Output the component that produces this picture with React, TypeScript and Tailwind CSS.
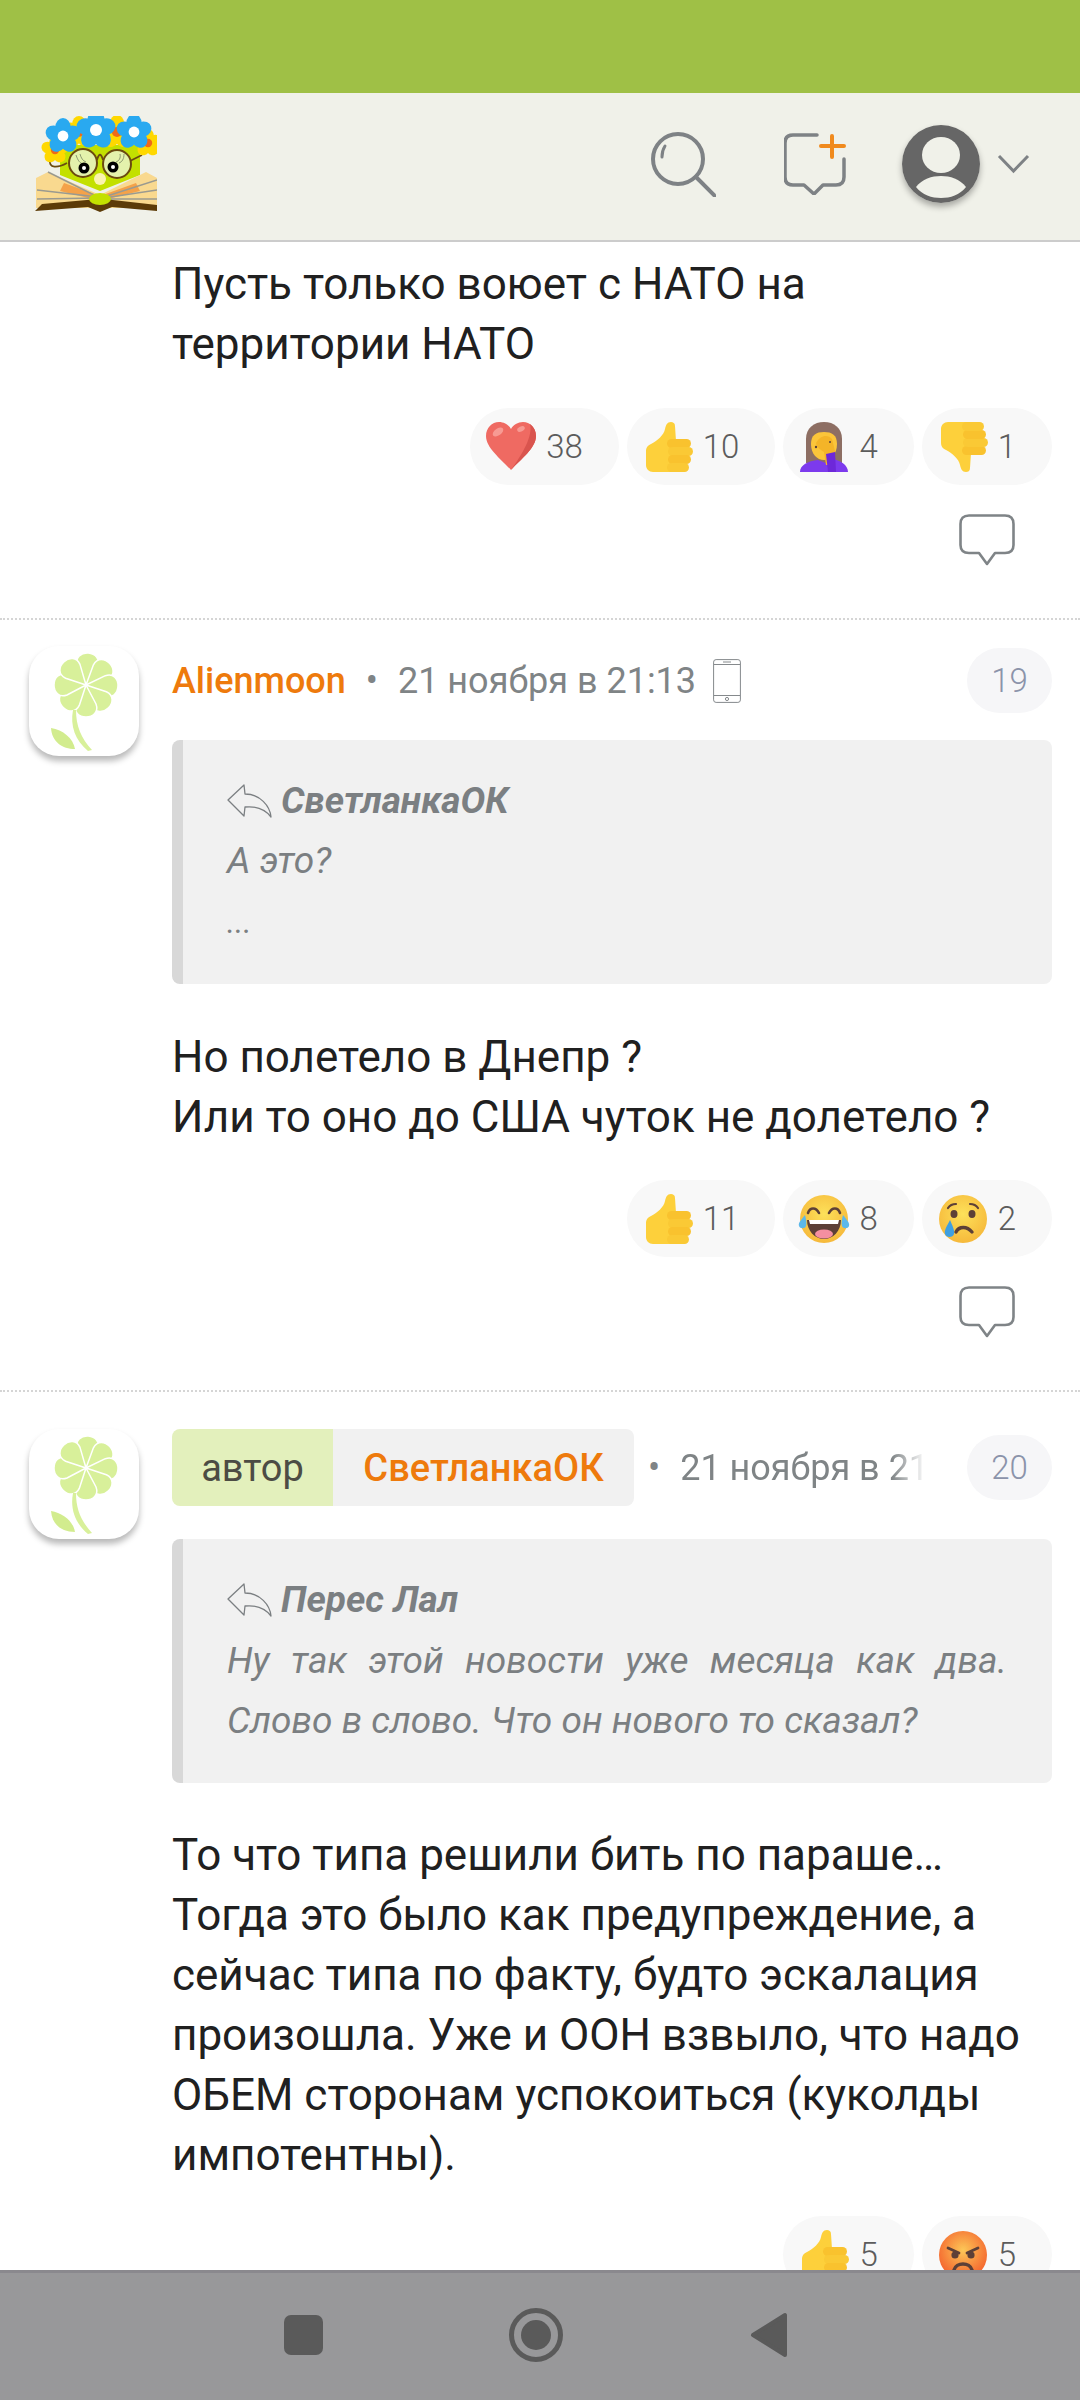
import type { ReactNode } from 'react'

const FONT = { fontFamily: 'Roboto, sans-serif' }

function LogoFlower({ x, y, petal, core, r = 5.5 }: { x: number; y: number; petal: string; core: string; r?: number }) {
  return (
    <g>
      {[0, 72, 144, 216, 288].map((a) => (
        <ellipse key={a} cx={x} cy={y - r} rx={r * 0.85} ry={r} fill={petal} transform={`rotate(${a} ${x} ${y})`} />
      ))}
      <circle cx={x} cy={y} r={r * 0.6} fill={core} />
    </g>
  )
}

function Logo() {
  return (
    <svg width="123" height="96" viewBox="14 33 123 96">
      {/* head */}
      <path d="M40 62 H120 V92 L80 108 L40 92 Z" fill="#c3e000" />
      {/* book pages */}
      <path d="M16 95 L28 89 L80 112 L126 89 L137 95 V125 H16 Z" fill="#f9d98f" />
      <path d="M44 100 L80 113 L116 100 L120 108 L80 118 L40 108 Z" fill="#f4a24a" />
      <path d="M28 89 L78 114 M17 107 L78 114 M17 116 L78 115 M137 97 L84 114 M137 107 L84 115 M137 116 L84 116" stroke="#9a9a90" strokeWidth="1.4" fill="none" />
      <path d="M15 128 L22 121 L78 116 L84 116 L137 122 V128 L92 124 L80 129 L68 124 Z" fill="#5c3b08" />
      <ellipse cx="80" cy="116" rx="11" ry="6" fill="#c3e000" />
      <ellipse cx="80" cy="96" rx="6" ry="6" fill="#fbf3b0" />
      {/* glasses */}
      <path d="M47 80 C38 85 28 86 30 76 C31 72 34 70 38 70 M106 80 L122 72" stroke="#6b4a10" strokeWidth="1.8" fill="none" />
      <circle cx="63" cy="80" r="14" fill="#e4f2ac" stroke="#6b4a10" strokeWidth="2" />
      <circle cx="97" cy="81" r="14" fill="#e4f2ac" stroke="#6b4a10" strokeWidth="2" />
      <path d="M77 77 C79 70 81 70 83 77" stroke="#6b4a10" strokeWidth="1.8" fill="none" />
      <path d="M56 72 C58 78 60 80 63 81 M60 71 C61 75 63 78 66 79 M104 71 C104 76 102 79 99 80 M100 71 C101 75 99 78 96 79" stroke="#8d9a70" strokeWidth="1" fill="none" />
      <circle cx="64" cy="85" r="5.5" fill="#000" />
      <circle cx="64" cy="85" r="2" fill="#fff" />
      <circle cx="93" cy="84" r="5.5" fill="#000" />
      <circle cx="93" cy="84" r="2" fill="#fff" />
      {/* wreath */}
      <LogoFlower x={35} y={67} petal="#ffd800" core="#ee6a1a" r={7} />
      <LogoFlower x={128} y={60} petal="#ffd800" core="#ee6a1a" r={7} />
      <LogoFlower x={59} y={49} petal="#ffd800" core="#ee6a1a" r={8} />
      <LogoFlower x={97} y={49} petal="#ffd800" core="#ee6a1a" r={8.5} />
      <LogoFlower x={43} y={53} petal="#29a9f0" core="#fff" r={9} />
      <LogoFlower x={76} y={47} petal="#29a9f0" core="#fff" r={10} />
      <LogoFlower x={114} y={49} petal="#29a9f0" core="#fff" r={9} />
    </svg>
  )
}

function SearchIcon() {
  return (
    <svg width="65" height="66" viewBox="0 0 65 66" fill="none" stroke="#7e8285" strokeLinecap="round">
      <circle cx="27" cy="28" r="25" strokeWidth="4" />
      <path d="M45 46 L64 65" strokeWidth="4" />
      <path d="M11 26 C11 21 12 18 14 15" strokeWidth="3" />
    </svg>
  )
}

function ComposeIcon() {
  return (
    <svg width="62" height="62" viewBox="0 0 62 62" fill="none" strokeLinecap="round" strokeLinejoin="round">
      <path d="M33 2 H9 Q1 2 1 10 V44 Q1 52 9 52 H20 L30 61 L39 52 H52 Q60 52 60 44 V26" stroke="#7e8285" strokeWidth="3.5" />
      <path d="M48 3 V24 M37 13 H60" stroke="#f08a1d" strokeWidth="4" />
    </svg>
  )
}

function UserIcon() {
  return (
    <div className="w-[78px] h-[78px] rounded-full shadow-[0_4px_6px_rgba(0,0,0,0.3)]">
      <svg width="78" height="78" viewBox="0 0 78 78">
        <circle cx="39" cy="39" r="39" fill="#666666" />
        <ellipse cx="39" cy="30" rx="19" ry="18" fill="#f0f1e9" />
        <path d="M14 62 C20 54 30 51 39 51 C48 51 58 54 64 62 C58 70 48 73 39 73 C30 73 20 70 14 62 Z" fill="#f0f1e9" />
      </svg>
    </div>
  )
}

function CommentIcon() {
  return (
    <svg width="56" height="52" viewBox="0 0 56 52" fill="none" stroke="#7f8487" strokeWidth="2.6" strokeLinejoin="round">
      <path d="M10 1.5 H46 Q54.5 1.5 54.5 10 V31 Q54.5 39 46 39 H36 L28 50 L20 39 H10 Q1.5 39 1.5 31 V10 Q1.5 1.5 10 1.5 Z" />
    </svg>
  )
}

function PhoneIcon() {
  return (
    <svg width="28" height="44" viewBox="0 0 28 44" fill="none" stroke="#85898c" strokeWidth="1">
      <rect x="0.6" y="0.6" width="26.8" height="42.8" rx="2.5" />
      <path d="M1 5.5 H27 M1 36.5 H27 M10 3 H18" />
      <circle cx="14" cy="40" r="1.6" />
    </svg>
  )
}

function ReplyIcon() {
  return (
    <svg width="45" height="34" viewBox="0 0 45 34" fill="none" stroke="#7b7f82" strokeWidth="1.3" strokeLinejoin="round">
      <path d="M17 1 L1 16 L17 32 L18 23 C28 22 38 25 44 33 C43 22 33 10 18 10 Z" />
    </svg>
  )
}

function Flower() {
  const angles = [4, 48, 92, 136, 180, 226, 270, 316]
  return (
    <svg width="110" height="110" viewBox="0 0 110 110">
      {angles.map((a) => (
        <path
          key={a}
          d="M57 39 L47 20 C44 12 50 7 57 7 C64 7 70 12 67 20 Z"
          fill="#d8f09a"
          stroke="#fff"
          strokeWidth="1.5"
          transform={`rotate(${a} 57 39)`}
        />
      ))}
      <path d="M44 64 C41 80 46 94 59 105 L63 104 C52 92 47 80 47 64 Z" fill="#d8f09a" />
      <path d="M22 82 C34 84 44 92 46 103 C33 103 23 96 22 82 Z" fill="#d2ec8e" />
    </svg>
  )
}

function Avatar() {
  return (
    <div className="w-[110px] h-[110px] shrink-0 rounded-[30px] bg-white shadow-[0_5px_6px_rgba(0,0,0,0.28)]">
      <Flower />
    </div>
  )
}

function ThumbUp() {
  return (
    <svg width="52" height="52" viewBox="0 0 52 52">
      <path d="M29 1 C25 1 24 4 23 8 C22 14 15 20 9 23 C5 25 4 27 4 31 V44 C4 48 7 51 11 51 H30 L34 20 L33 5 C33 2 31 1 29 1 Z" fill="#fdd03b" />
      <rect x="25" y="18" width="24" height="9" rx="4.5" fill="#f9c22e" />
      <rect x="26" y="26" width="25" height="9" rx="4.5" fill="#fac935" />
      <rect x="26" y="34" width="23" height="9" rx="4.5" fill="#f9c22e" />
      <rect x="25" y="42" width="22" height="9" rx="4.5" fill="#fac935" />
    </svg>
  )
}

function ThumbDown() {
  return (
    <div className="rotate-180 -scale-x-100">
      <ThumbUp />
    </div>
  )
}

function Heart() {
  return (
    <svg width="52" height="52" viewBox="0 0 52 52">
      <path d="M26 49 C16 38 1 27 1 15 C1 7 7 1 14 1 C19 1 24 4 26 8 C28 4 33 1 38 1 C45 1 51 7 51 15 C51 27 36 38 26 49 Z" fill="#ef6a62" />
      <path d="M26 49 C36 38 51 27 51 15 C51 10 49 6 45 3 C48 15 38 32 26 49 Z" fill="#d9544e" />
      <ellipse cx="13" cy="11" rx="6" ry="3.5" fill="#f79a93" transform="rotate(-35 13 11)" />
      <ellipse cx="36" cy="8" rx="4" ry="2.5" fill="#f79a93" transform="rotate(-25 36 8)" />
    </svg>
  )
}

function Facepalm() {
  return (
    <svg width="52" height="52" viewBox="0 0 52 52">
      <path d="M8 42 V18 C8 7 16 1 26 1 C36 1 44 7 44 18 V42 Z" fill="#8d6e63" />
      <path d="M13 23 C13 14 18 11 26 11 C34 11 39 14 39 23 C39 33 33 39 26 39 C19 39 13 33 13 23 Z" fill="#fbc53a" />
      <path d="M2 51 C2 44 10 40 20 39 L28 42 L34 38 C42 39 50 44 50 51 Z" fill="#7c3aed" />
      <path d="M18 22 C22 14 30 13 34 18 L37 30 L36 44 L28 44 L26 31 C23 29 19 27 18 22 Z" fill="#f4b428" />
      <path d="M28 33 L37 31 L38 51 L30 51 Z" fill="#6d28d9" />
      <circle cx="32" cy="21" r="1" fill="#5d4037" />
      <circle cx="18" cy="26" r="1.2" fill="#5d4037" />
    </svg>
  )
}

function Face({ children, id }: { children: ReactNode; id: string }) {
  const colours: Record<string, [string, string]> = {
    joy: ['#fde15a', '#f6b93b'],
    cry: ['#fde15a', '#f6b93b'],
    angry: ['#fcc757', '#f4622d'],
  }
  return (
    <svg width="52" height="52" viewBox="0 0 52 52">
      <defs>
        <radialGradient id={id} cx="50%" cy="40%" r="60%">
          <stop offset="0%" stopColor={colours[id][0]} />
          <stop offset="100%" stopColor={colours[id][1]} />
        </radialGradient>
      </defs>
      <circle cx="26" cy="26" r="24" fill={`url(#${id})`} />
      {children}
    </svg>
  )
}

function Joy() {
  return (
    <Face id="joy">
      <path d="M10 20 C12 14 18 14 21 20 M31 20 C34 14 40 14 42 20" stroke="#5d4037" strokeWidth="2.6" fill="none" strokeLinecap="round" />
      <path d="M9 27 H43 C43 38 35 46 26 46 C17 46 9 38 9 27 Z" fill="#5d4037" />
      <path d="M11 27 H41 L40 31 H12 Z" fill="#fff" />
      <ellipse cx="26" cy="41" rx="9" ry="4.5" fill="#f48fa0" />
      <path d="M7 22 C3 27 0 30 1 33 C2 36 7 36 8 33 C9 30 8 26 7 22 Z M45 22 C49 27 52 30 51 33 C50 36 45 36 44 33 C43 30 44 26 45 22 Z" fill="#5cb8ea" />
    </Face>
  )
}

function Cry() {
  return (
    <Face id="cry">
      <path d="M11 15 C13 12 16 11 19 11 M33 11 C36 11 39 12 41 15" stroke="#5d4037" strokeWidth="2.2" fill="none" strokeLinecap="round" />
      <ellipse cx="17" cy="21" rx="3.5" ry="4" fill="#5d4037" />
      <ellipse cx="35" cy="21" rx="3.5" ry="4" fill="#5d4037" />
      <path d="M19 39 C22 33 30 33 35 39" stroke="#5d4037" strokeWidth="3.4" fill="none" strokeLinecap="round" />
      <path d="M13 27 C10 33 7 37 8 41 C9 45 16 45 17 41 C18 37 15 32 13 27 Z" fill="#3f9fe0" />
    </Face>
  )
}

function Angry() {
  return (
    <Face id="angry">
      <path d="M11 19 L22 24 M41 19 L30 24" stroke="#5d4037" strokeWidth="2.8" strokeLinecap="round" />
      <circle cx="18" cy="26" r="3.6" fill="#5d4037" />
      <circle cx="34" cy="26" r="3.6" fill="#5d4037" />
      <path d="M17 41 C19 33 33 33 35 41" stroke="#5d4037" strokeWidth="3.4" fill="none" strokeLinecap="round" />
    </Face>
  )
}

function Reaction({ icon, count }: { icon: ReactNode; count: number }) {
  return (
    <div className="flex items-center h-[77px] rounded-full bg-[#f8f8f8] pl-[15px] pr-[36px] gap-[9px]">
      {icon}
      <span className="text-[33px] text-[#5c5c5c] font-light">{count}</span>
    </div>
  )
}

function Reactions({ items }: { items: { icon: ReactNode; count: number }[] }) {
  return (
    <div className="flex justify-end gap-2">
      {items.map((it, i) => (
        <Reaction key={i} icon={it.icon} count={it.count} />
      ))}
    </div>
  )
}

function Quote({ author, children }: { author: string; children: ReactNode }) {
  return (
    <div className="rounded-lg bg-[#f1f1f1] border-l-[11px] border-[#d8d8d8] pl-[44px] pr-[45px] h-[244px] pt-[30px] italic text-[#7b7f82] text-[37px] leading-[60px]">
      <div className="flex items-center gap-[9px] font-bold h-[62px]">
        <ReplyIcon />
        <span>{author}</span>
      </div>
      {children}
    </div>
  )
}

function NumberBadge({ n }: { n: number }) {
  return (
    <div className="shrink-0 w-[85px] h-[65px] rounded-full bg-[#f6f6f8] flex items-center justify-center text-[33px] text-[#8b93aa] font-light">
      {n}
    </div>
  )
}

export default function App() {
  return (
    <div className="w-[1080px] h-[2400px] flex flex-col overflow-hidden bg-white" style={FONT}>
      <div className="h-[93px] shrink-0 bg-[#9fc046]" />
      <header className="h-[149px] shrink-0 bg-[#f0f1e9] border-b-2 border-[#cccccc] flex items-center pl-[34px] pr-[50px] pb-[5px]">
        <Logo />
        <div className="ml-auto flex items-center">
          <SearchIcon />
          <div className="ml-[68px]">
            <ComposeIcon />
          </div>
          <div className="ml-[56px]">
            <UserIcon />
          </div>
          <svg className="ml-[17px]" width="33" height="20" viewBox="0 0 33 20" fill="none" stroke="#7e8285" strokeWidth="3">
            <path d="M2 2 L16.5 17 L31 2" />
          </svg>
        </div>
      </header>

      <main className="flex-1 min-h-0 overflow-hidden text-[44px] leading-[60px] text-[#202020]">
        {/* tail of the previous comment */}
        <section className="pl-[172px] pr-[28px] pt-[12px] h-[378px] border-b-2 border-dotted border-[#d5d5d5]">
          <p>
            Пусть только воюет с НАТО на
            <br />
            территории НАТО
          </p>
          <div className="mt-[34px]">
            <Reactions
              items={[
                { icon: <Heart />, count: 38 },
                { icon: <ThumbUp />, count: 10 },
                { icon: <Facepalm />, count: 4 },
                { icon: <ThumbDown />, count: 1 },
              ]}
            />
          </div>
          <div className="flex justify-end mt-[29px] pr-[37px]">
            <CommentIcon />
          </div>
        </section>

        <section className="flex pl-[29px] pr-[28px] pt-[26px] h-[772px] border-b-2 border-dotted border-[#d5d5d5]">
          <Avatar />
          <div className="ml-[33px] flex-1 min-w-0">
            <div className="flex items-center h-[65px] mt-[2px] text-[36px]">
              <span className="font-medium text-[#ee7a0c]">Alienmoon</span>
              <span className="ml-[20px] text-[#7f8486]">•</span>
              <span className="ml-[20px] text-[#7f8486]">21 ноября в 21:13</span>
              <span className="ml-[17px]">
                <PhoneIcon />
              </span>
              <span className="ml-auto">
                <NumberBadge n={19} />
              </span>
            </div>
            <div className="mt-[27px]">
              <Quote author="СветланкаОК">
                <p className="-mt-[1px]">А это?</p>
                <p className="mt-[1px] text-[32px]">...</p>
              </Quote>
            </div>
            <p className="mt-[43px]">
              Но полетело в Днепр ?
              <br />
              Или то оно до США чуток не долетело ?
            </p>
            <div className="mt-[33px]">
              <Reactions
                items={[
                  { icon: <ThumbUp />, count: 11 },
                  { icon: <Joy />, count: 8 },
                  { icon: <Cry />, count: 2 },
                ]}
              />
            </div>
            <div className="flex justify-end mt-[29px] pr-[37px]">
              <CommentIcon />
            </div>
          </div>
        </section>

        <section className="flex pl-[29px] pr-[28px] pt-[37px]">
          <Avatar />
          <div className="ml-[33px] flex-1 min-w-0">
            <div className="flex items-center h-[77px] text-[36px]">
              <div className="shrink-0 flex h-full rounded-lg overflow-hidden">
                <span className="w-[161px] bg-[#e3f0bc] text-[#4c4c44] flex items-center justify-center text-[38px]">автор</span>
                <span className="w-[301px] bg-[#f1f1f1] text-[#ee7a0c] font-medium flex items-center justify-center text-[38px]">СветланкаОК</span>
              </div>
              <span className="ml-[14px] text-[#7f8486] shrink-0">•</span>
              <span className="ml-[20px] w-[246px] shrink-0 overflow-hidden whitespace-nowrap text-[#7f8486] [mask-image:linear-gradient(to_right,black_86%,transparent)]">
                21 ноября в 21:13
              </span>
              <span className="ml-auto">
                <NumberBadge n={20} />
              </span>
            </div>
            <div className="mt-[33px]">
              <Quote author="Перес Лал">
                <p className="text-justify">Ну так этой новости уже месяца как два. Слово в слово. Что он нового то сказал?</p>
              </Quote>
            </div>
            <p className="mt-[42px]">
              То что типа решили бить по параше… Тогда это было как предупреждение, а сейчас типа по факту, будто эскалация произошла. Уже и ООН взвыло, что надо ОБЕМ сторонам успокоиться (куколды импотентны).
            </p>
            <div className="mt-[31px]">
              <Reactions
                items={[
                  { icon: <ThumbUp />, count: 5 },
                  { icon: <Angry />, count: 5 },
                ]}
              />
            </div>
          </div>
        </section>
      </main>

      <nav className="h-[130px] shrink-0 bg-[#98989a] border-t-[3px] border-[#8a898e] flex items-center pb-[3px]">
        <div className="ml-[284px] w-[39px] h-[40px] rounded-[7px] bg-[#5a5a5a]" />
        <div className="ml-[186px] w-[54px] h-[54px] rounded-full border-[5px] border-[#5a5a5a] flex items-center justify-center">
          <div className="w-[30px] h-[30px] rounded-full bg-[#5a5a5a]" />
        </div>
        <svg className="ml-[187px]" width="38" height="46" viewBox="0 0 38 46">
          <path d="M35 3 V43 L3 23 Z" fill="#5a5a5a" stroke="#5a5a5a" strokeWidth="4" strokeLinejoin="round" />
        </svg>
      </nav>
    </div>
  )
}
